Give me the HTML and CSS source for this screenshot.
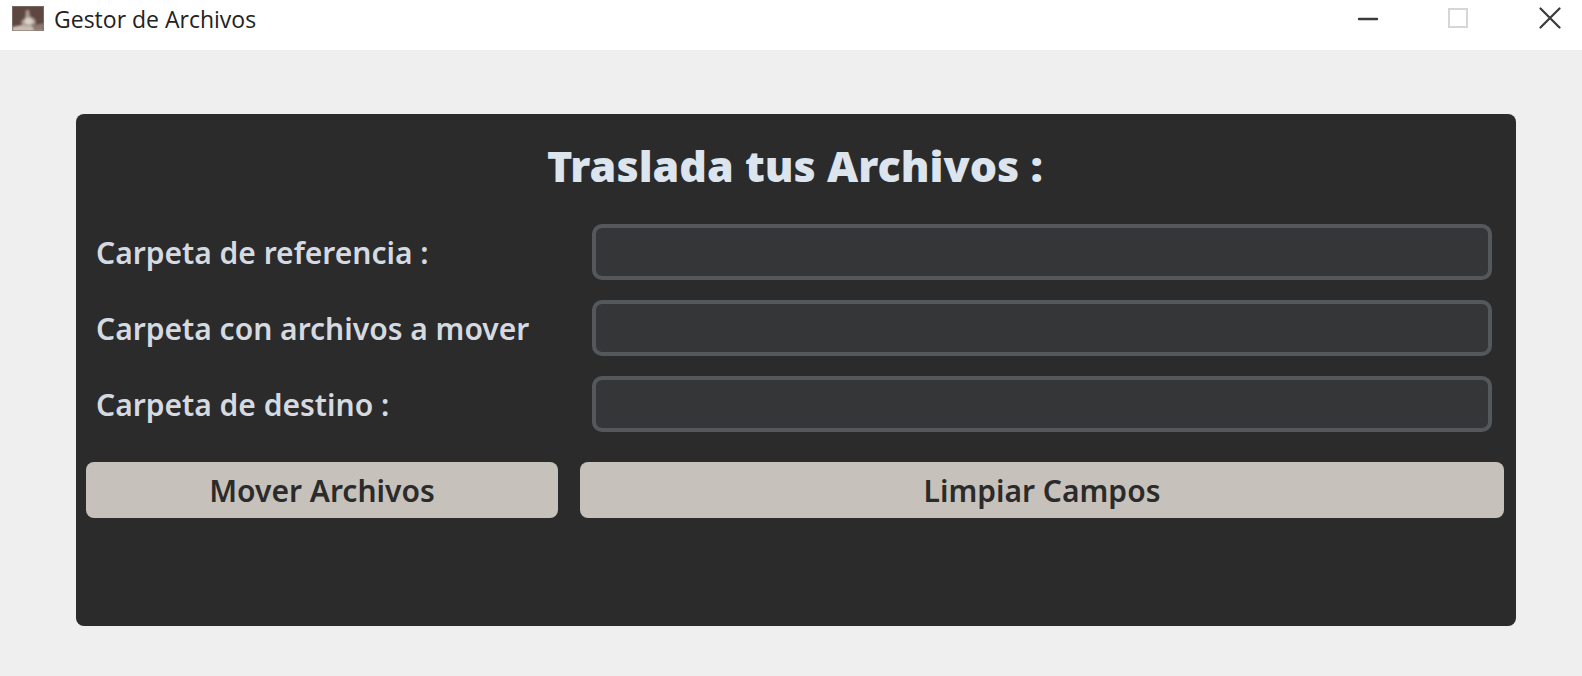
FILE: index.html
```html
<!DOCTYPE html>
<html lang="es">
<head>
<meta charset="utf-8">
<title>Gestor de Archivos</title>
<link rel="stylesheet" href="styles.css">
</head>
<body>
<header class="titlebar">
  <svg class="app-icon" viewBox="0 0 32 25" aria-hidden="true">
    <defs>
      <filter id="soft" x="-10%" y="-10%" width="120%" height="120%"><feGaussianBlur stdDeviation="0.8"/></filter>
      <clipPath id="frame"><rect width="32" height="25"/></clipPath>
    </defs>
    <rect width="32" height="25" fill="#5e4740"/>
    <g filter="url(#soft)" clip-path="url(#frame)">
      <path d="M0 21L10 19L24 20L32 23V26H0Z" fill="#c9bdb1"/>
      <path d="M20 20L32 17V25H22Z" fill="#8d7a70"/>
      <path d="M14 4L17 4L18 10L23 13L24 18L18 20L10 19L9 15L13 12Z" fill="#a89b91"/>
      <path d="M14 12L18 12L22 16L17 19L12 17Z" fill="#d9d2c8"/>
    </g>
    <rect x="0.5" y="0.5" width="31" height="24" fill="none" stroke="#8d7d76" stroke-opacity="0.6"/>
  </svg>
  <h1 class="window-title">Gestor de Archivos</h1>
  <div class="window-controls">
    <button class="control" type="button" aria-label="Minimizar">
      <svg viewBox="0 0 22 22"><path d="M2 12H20" stroke="#3c3a3b" stroke-width="2.4" stroke-linecap="round"/></svg>
    </button>
    <button class="control" type="button" aria-label="Maximizar" disabled>
      <svg viewBox="0 0 22 22"><rect x="1" y="2" width="18" height="18" fill="none" stroke="#d6d6d6" stroke-width="2"/></svg>
    </button>
    <button class="control" type="button" aria-label="Cerrar">
      <svg viewBox="0 0 22 22"><path d="M1.5 1.5L20.5 20.5M20.5 1.5L1.5 20.5" stroke="#3a3a3a" stroke-width="2.2" stroke-linecap="round"/></svg>
    </button>
  </div>
</header>
<main class="content">
  <form class="panel">
    <h2 class="heading">Traslada tus Archivos :</h2>
    <label class="label" for="referencia">Carpeta de referencia :</label>
    <input class="field" id="referencia" type="text">
    <label class="label" for="origen">Carpeta con archivos a mover</label>
    <input class="field" id="origen" type="text">
    <label class="label" for="destino">Carpeta de destino :</label>
    <input class="field" id="destino" type="text">
    <button class="action" type="button">Mover Archivos</button>
    <button class="action" type="reset">Limpiar Campos</button>
  </form>
</main>
</body>
</html>
```
FILE: styles.css
```css
* {
  box-sizing: border-box;
}

body {
  margin: 0;
  min-height: 100vh;
  display: flex;
  flex-direction: column;
  background: #efefef;
  font-family: "Noto Sans", "Open Sans", sans-serif;
}

.titlebar {
  display: flex;
  align-items: center;
  height: 50px;
  padding: 0 21px 14px 12px;
  background: #fff;
}

.app-icon {
  width: 32px;
  height: 25px;
}

.window-title {
  margin: 2px 0 0 10px;
  font-family: "Open Sans", "Noto Sans", sans-serif;
  font-size: 23px;
  font-weight: 400;
  line-height: 32px;
  color: #222;
}

.window-controls {
  display: flex;
  gap: 69px;
  margin-left: auto;
}

.control {
  display: flex;
  padding: 0;
  border: 0;
  background: none;
}

.control svg {
  width: 22px;
  height: 22px;
}

.content {
  flex: 1;
  display: flex;
  padding: 64px 66px 50px 76px;
}

.panel {
  flex: 1;
  display: grid;
  grid-template-columns: 472fr 924fr;
  grid-auto-rows: max-content;
  gap: 20px 22px;
  padding: 20px 12px 20px 10px;
  border-radius: 8px;
  background: #2b2b2b;
}

.heading {
  grid-column: 1 / -1;
  margin: 0;
  padding-bottom: 6px;
  font-size: 43px;
  font-weight: 900;
  line-height: 64px;
  text-align: center;
  color: #dce4ee;
}

.label {
  padding: 2px 0 0 10px;
  font-size: 30px;
  font-weight: 600;
  line-height: 54px;
  white-space: nowrap;
  color: #d5dae1;
}

.field {
  min-width: 0;
  height: 56px;
  margin: 0 12px;
  padding: 0 16px;
  border: 4px solid #55585a;
  border-radius: 10px;
  background: #343638;
  font: 500 30px "Noto Sans", sans-serif;
  color: #dce4ee;
}

.action {
  height: 56px;
  margin-top: 10px;
  padding: 0;
  border: 0;
  border-radius: 8px;
  background: #c7c1bb;
  font: 600 30px "Noto Sans", sans-serif;
  color: #2b2b2b;
}
```
